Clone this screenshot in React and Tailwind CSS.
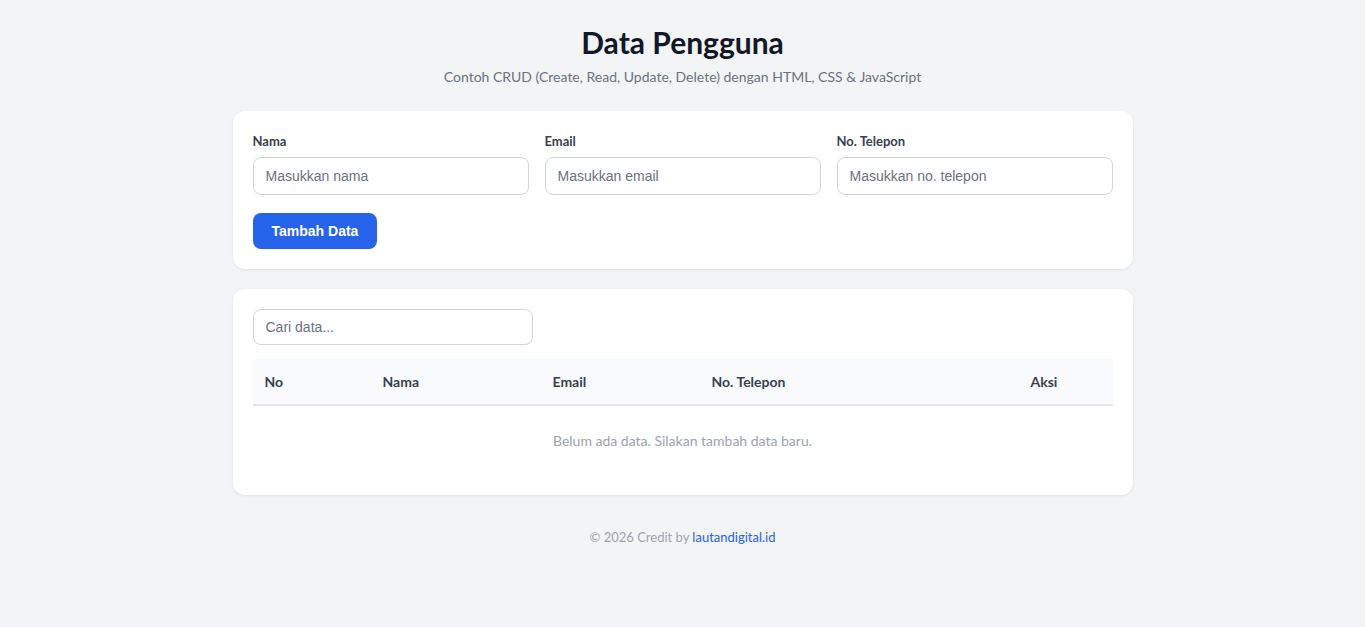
export default function App() {
  return (
    <div className="min-h-[627px] bg-[#f3f4f6] font-['Lato',sans-serif] text-[#1f2937]">
      <div className="mx-auto w-[900px] pt-[24px] pb-10">
        <h1 className="text-center text-[30px] font-bold leading-[36px] text-[#111827]">Data Pengguna</h1>
        <p className="mt-[7px] text-center text-[14px] leading-[20px] text-[#6b7280]">
          Contoh CRUD (Create, Read, Update, Delete) dengan HTML, CSS &amp; JavaScript
        </p>

        <div className="mt-[24px] rounded-xl bg-white p-5 shadow-[0_1px_3px_rgba(0,0,0,0.08)]">
          <div className="grid grid-cols-3 gap-4">
            {[
              ["Nama", "Masukkan nama"],
              ["Email", "Masukkan email"],
              ["No. Telepon", "Masukkan no. telepon"],
            ].map(([l, p]) => (
              <div key={l} className="flex flex-col">
                <label className="mb-[6px] text-[13px] font-bold leading-[20px] text-[#374151]">{l}</label>
                <input
                  placeholder={p}
                  className="h-[38px] rounded-lg border border-[#d1d5db] px-3 font-['Liberation_Sans',Arial,sans-serif] text-[14px] outline-none placeholder:text-[#6b7280]"
                />
              </div>
            ))}
          </div>
          <button className="mt-[18px] h-9 rounded-lg bg-[#2563eb] px-[19px] font-['Liberation_Sans',Arial,sans-serif] text-[14px] font-bold text-white">
            Tambah Data
          </button>
        </div>

        <div className="mt-5 rounded-xl bg-white p-5 shadow-[0_1px_3px_rgba(0,0,0,0.08)]">
          <input
            placeholder="Cari data..."
            className="h-9 w-[280px] rounded-lg border border-[#d1d5db] px-3 font-['Liberation_Sans',Arial,sans-serif] text-[14px] outline-none placeholder:text-[#6b7280]"
          />
          <table className="mt-[14px] w-full border-collapse text-[14px]">
            <thead>
              <tr className="border-b-2 border-[#e5e7eb] bg-[#f8fafc] text-left">
                <th className="w-[118px] px-3 pt-[13px] pb-[12px] font-bold leading-[20px] text-[#374151]">No</th>
                <th className="w-[170px] px-3 pt-[13px] pb-[12px] font-bold leading-[20px] text-[#374151]">Nama</th>
                <th className="w-[159px] px-3 pt-[13px] pb-[12px] font-bold leading-[20px] text-[#374151]">Email</th>
                <th className="w-[319px] px-3 pt-[13px] pb-[12px] font-bold leading-[20px] text-[#374151]">No. Telepon</th>
                <th className="px-3 pt-[13px] pb-[12px] font-bold leading-[20px] text-[#374151]">Aksi</th>
              </tr>
            </thead>
            <tbody>
              <tr>
                <td colSpan={5} className="pt-[25px] pb-[24px] text-center leading-[20px] text-[#9ca3af]">
                  Belum ada data. Silakan tambah data baru.
                </td>
              </tr>
            </tbody>
          </table>
        </div>

        <p className="mt-[32px] text-center text-[13px] leading-[20px] text-[#9ca3af]">
          © 2026 Credit by <a className="text-[#2563eb]">lautandigital.id</a>
        </p>
      </div>
    </div>
  );
}
